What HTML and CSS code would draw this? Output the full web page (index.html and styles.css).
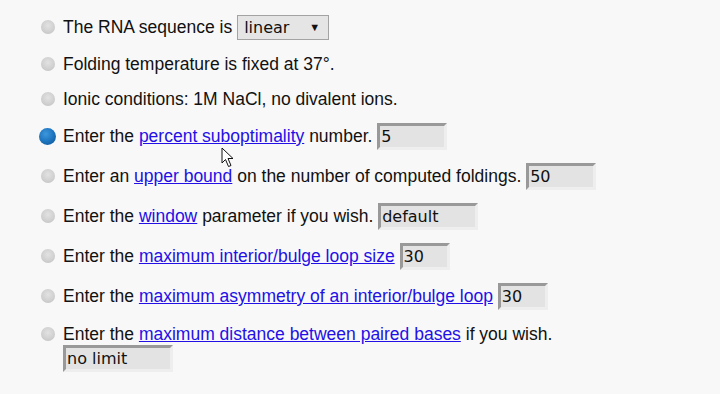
FILE: index.html
```html
<!DOCTYPE html>
<html lang="en">
<head>
  <meta charset="UTF-8">
  <title>Folding options</title>
  <link rel="stylesheet" href="styles.css">
</head>
<body>

  <ul class="options">
    <li class="option">
      <span class="bullet"></span>The RNA sequence is
      <span class="select-wrap">
        <select class="select">
          <option>linear</option>
          <option>circular</option>
        </select>
      </span>
    </li>
    <li class="option"><span class="bullet"></span>Folding temperature is fixed at 37°.</li>
    <li class="option"><span class="bullet"></span>Ionic conditions: 1M NaCl, no divalent ions.</li>
    <li class="option">
      <span class="bullet active"></span>Enter the <a href="#">percent suboptimality</a> number.
      <input class="field w70" type="text" value="5">
    </li>
    <li class="option">
      <span class="bullet"></span>Enter an <a href="#">upper bound</a> on the number of computed foldings.
      <input class="field w70" type="text" value="50">
    </li>
    <li class="option">
      <span class="bullet"></span>Enter the <a href="#">window</a> parameter if you wish.
      <input class="field w100" type="text" value="default">
    </li>
    <li class="option">
      <span class="bullet"></span>Enter the <a href="#">maximum interior/bulge loop size</a>
      <input class="field w50" type="text" value="30">
    </li>
    <li class="option">
      <span class="bullet"></span>Enter the <a href="#">maximum asymmetry of an interior/bulge loop</a>
      <input class="field w50" type="text" value="30">
    </li>
    <li class="option">
      <span class="bullet"></span>Enter the <a href="#">maximum distance between paired bases</a> if you wish.<br>
      <input class="field w110" type="text" value="no limit">
    </li>
  </ul>

  <!-- mouse pointer -->
  <svg class="cursor" width="14" height="22" viewBox="0 0 14 22">
    <path d="M1 1 L1 16 L4.5 12.5 L7.5 19.5 L10 18.5 L7 11.5 L12 11.5 Z" fill="#fff" stroke="#111" stroke-width="1"/>
  </svg>

</body>
</html>
```

FILE: styles.css
```css
body {
  margin: 0;
  background: #f8f8f8;
  color: #111;
  font-family: "Liberation Sans", Arial, sans-serif;
  font-size: 17.5px;
}

.options {
  list-style: none;
  margin: 0;
  padding: 15px 0 0 41px;
  display: flex;
  flex-direction: column;
  gap: 13px;
}

.option {
  line-height: 22px;
  padding-left: 22px;
  text-indent: -22px;
}

.bullet {
  display: inline-block;
  width: 14px;
  height: 14px;
  margin-right: 8px;
  border-radius: 50%;
  vertical-align: -1px;
  background: radial-gradient(circle at 50% 40%, #e2e2e2 0%, #cfcfcf 60%, #b9b9b9 100%);
}

.bullet.active {
  width: 17px;
  height: 17px;
  margin-left: -2px;
  margin-right: 7px;
  vertical-align: -3px;
  background: radial-gradient(circle at 40% 35%, #3f97dc 0%, #1f78c2 45%, #0b4f8f 100%);
}

a {
  color: #2210e6;
}

.select-wrap {
  position: relative;
  display: inline-block;
  text-indent: 0;
}

.select-wrap::after {
  content: "▼";
  position: absolute;
  right: 9px;
  top: 0;
  font-size: 11px;
  line-height: 25px;
  color: #111;
  pointer-events: none;
}

.select {
  appearance: none;
  width: 92px;
  height: 25px;
  padding: 0 0 0 6px;
  border: 1px solid #a3a3a3;
  border-radius: 0;
  background: #e5e5e5;
  color: #111;
  font-family: "DejaVu Sans", sans-serif;
  font-size: 16px;
}

.field {
  box-sizing: border-box;
  height: 27px;
  padding: 0 0 0 1px;
  border: 3px solid;
  border-color: #999 #eee #eee #999;
  background: #e3e3e3;
  color: #111;
  font-family: "DejaVu Sans", sans-serif;
  font-size: 16px;
  text-indent: 0;
  vertical-align: baseline;
}

.w50 { width: 50px; }
.w70 { width: 70px; }
.w100 { width: 100px; }
.w110 { width: 110px; }

.cursor {
  position: absolute;
  left: 221px;
  top: 147px;
}
```
